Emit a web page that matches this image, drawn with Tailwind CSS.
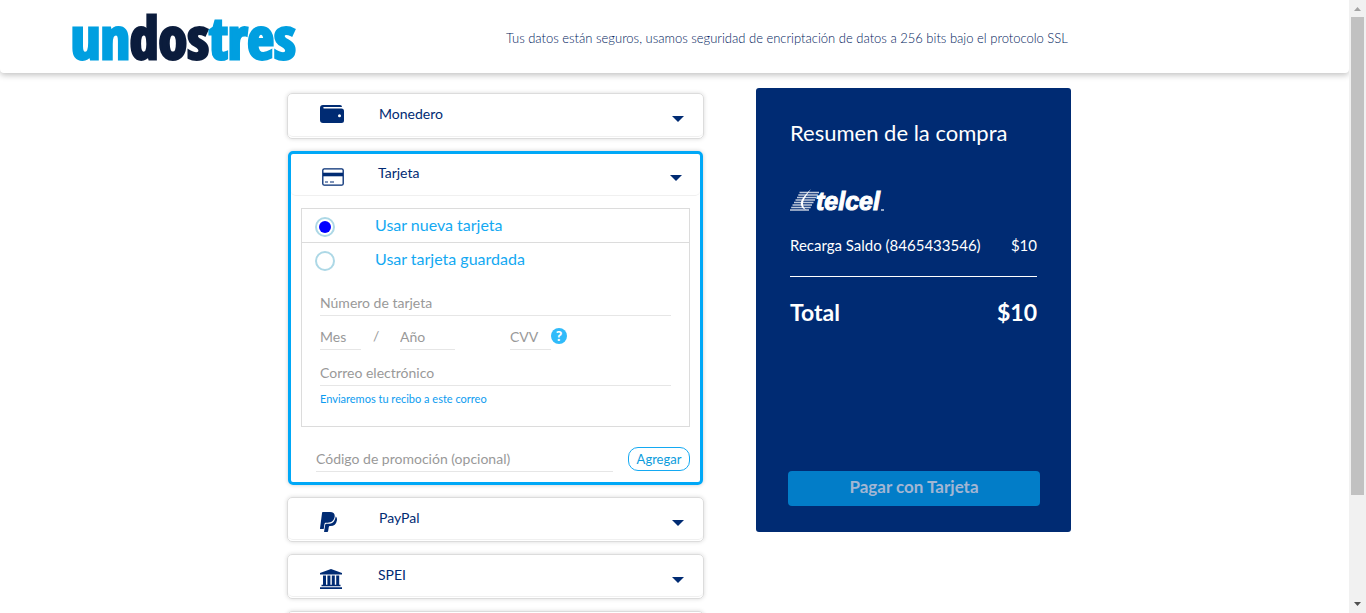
<!DOCTYPE html>
<html lang="es">
<head>
<meta charset="utf-8">
<title>UnDosTres - Pago</title>
<script src="https://cdn.jsdelivr.net/npm/@tailwindcss/browser@4"></script>
</head>
<body class="flex h-screen overflow-hidden bg-white font-['Lato',sans-serif] text-[#002b73]">
<div class="flex min-w-0 flex-1 flex-col">
  <header class="flex h-[73px] shrink-0 items-center rounded-b-[4px] pl-[71px] shadow-[0_2px_6px_rgba(0,0,0,0.25)]">
    <a href="#" class="w-[435px] shrink-0 font-['Noto_Sans_ExtraCondensed_Black','Noto_Sans_ExtraCondensed','Open_Sans_Condensed','Roboto_Condensed','Liberation_Sans',sans-serif] text-[58px] leading-[73px] font-black text-[#009fe0] [-webkit-text-stroke:3px_currentColor]">un<span class="text-[#0b1c3c]">dos</span>tres</a>
    <p class="pt-1 text-[13px] font-light text-[#001a5c]">Tus datos están seguros, usamos seguridad de encriptación de datos a 256 bits bajo el protocolo SSL</p>
  </header>

  <main class="flex items-start justify-center gap-[52px] pt-[15px] pl-[9px]">
    <section class="mt-[5px] flex w-[417px] flex-col gap-3" aria-label="Formas de pago">
      <div class="rounded-[5px] border border-[#dcdcdc] pb-px shadow-[0_0_4px_rgba(0,0,0,0.15)]">
        <button type="button" class="flex h-[43px] w-full rounded-[5px] border-b border-[#f0f0f0] pr-[19px] pl-8 text-left text-[14px]">
          <span class="w-[59px] pt-[11px]"><svg class="h-[18px] w-6" viewBox="0 0 24 18" fill="#002b73"><path fill-rule="evenodd" d="M3 0h17a2 2 0 0 1 2 2H4a.7.7 0 0 0 0 1.500H21.500a2.500 2.500 0 0 1 2.500 2.500V15.500a2.500 2.500 0 0 1-2.500 2.500H3a3 3 0 0 1-3-3V3a3 3 0 0 1 3-3ZM19.500 9.300a1.500 1.500 0 1 0 0 3 1.500 1.500 0 0 0 0-3Z"/></svg></span>
          <span class="flex-1 pt-[9px]">Monedero</span>
          <svg class="mt-[22px] h-[6px] w-3" viewBox="0 0 12 6" fill="#002b73"><path d="M0 0h12L6 6Z"/></svg>
        </button>
      </div>

      <div class="mx-px rounded-[5px] border-[3px] border-[#00a8f7] pb-[10px] shadow-[0_0_4px_rgba(0,0,0,0.2)]">
        <button type="button" class="flex h-[42px] w-full rounded-[5px] border-b border-[#f0f0f0] pr-[18px] pl-[31px] text-left text-[14px]">
          <span class="w-[56px] pt-[14px]"><svg class="h-[18px] w-[22px]" viewBox="0 0 22 18" fill="none" stroke="#002b73"><rect x=".8" y=".8" width="20.400" height="16.400" rx="1.500" stroke-width="1.300"/><path d="M1 6.500h20" stroke-width="3.600"/><path d="M3 14h3M8 14h4" stroke-width="1.200"/></svg></span>
          <span class="flex-1 pt-[8px]">Tarjeta</span>
          <svg class="mt-[21px] h-[6px] w-3" viewBox="0 0 12 6" fill="#002b73"><path d="M0 0h12L6 6Z"/></svg>
        </button>
        <form class="mx-[10px] mt-3">
          <div class="border border-[#dcdcdc] pb-[19px] text-[14px]">
            <label class="flex h-[34px] items-center border-b border-[#dcdcdc] pb-[2px] pl-[13px] text-[16px] text-[#14a9f2]">
              <input type="radio" name="card" checked class="mt-1 mr-10 size-5 appearance-none rounded-full border-2 border-[#add8e6] bg-white checked:bg-[#0000ff] checked:bg-clip-content checked:p-[2px]">Usar nueva tarjeta
            </label>
            <label class="flex h-[34px] items-center pb-[2px] pl-[13px] text-[16px] text-[#14a9f2]">
              <input type="radio" name="card" class="mt-1 mr-10 size-5 appearance-none rounded-full border-2 border-[#add8e6] bg-white checked:bg-[#0000ff] checked:bg-clip-content checked:p-[2px]">Usar tarjeta guardada
            </label>
            <div class="px-[18px]">
              <input aria-label="Número de tarjeta" placeholder="Número de tarjeta" class="mt-[14px] block h-[25px] w-full border-b border-[#e6e6e6] pb-[2px] outline-none placeholder:text-[#999]">
              <div class="mt-[9px] flex h-[25px]">
                <input aria-label="Mes" placeholder="Mes" class="h-full w-[41px] border-b border-[#e6e6e6] pb-[2px] outline-none placeholder:text-[#999]">
                <span class="w-[39px] pl-3 text-[#999]">/</span>
                <input aria-label="Año" placeholder="Año" class="mr-[55px] h-full w-[55px] border-b border-[#e6e6e6] pb-[2px] outline-none placeholder:text-[#999]">
                <input aria-label="CVV" placeholder="CVV" class="h-full w-[41px] border-b border-[#e6e6e6] pb-[2px] outline-none placeholder:text-[#999]">
                <button type="button" aria-label="Ayuda" class="mt-[3px] flex size-4 items-center justify-center rounded-full bg-[#30bbfa] text-[14px] leading-none font-black text-white">?</button>
              </div>
              <input type="email" aria-label="Correo electrónico" placeholder="Correo electrónico" class="mt-[11px] block h-[25px] w-full border-b border-[#e6e6e6] pb-[2px] outline-none placeholder:text-[#999]">
              <p class="mt-[5px] text-[11px] leading-4 text-[#0c9cf0]">Enviaremos tu recibo a este correo</p>
            </div>
          </div>
          <div class="mt-5 flex items-start gap-[15px] pl-[15px]">
            <input aria-label="Código de promoción (opcional)" placeholder="Código de promoción (opcional)" class="h-[25px] min-w-0 flex-1 border-b border-[#e6e6e6] pb-[2px] text-[14px] outline-none placeholder:text-[#999]">
            <button type="button" class="h-6 w-[62px] rounded-[10px] border border-[#14a9f2] pt-[2px] text-[13px] text-[#0c9cdc]">Agregar</button>
          </div>
        </form>
      </div>

      <div class="rounded-[5px] border border-[#dcdcdc] pb-px shadow-[0_0_4px_rgba(0,0,0,0.15)]">
        <button type="button" class="flex h-[42px] w-full rounded-[5px] border-b border-[#f0f0f0] pr-[19px] pl-8 text-left text-[14px]">
          <span class="w-[59px] pt-[14px]"><svg class="h-5 w-[17px]" viewBox="0 0 17 20" fill="#002b73"><path d="M2.800 0H10c3.600 0 5.200 2 4.600 5.100-.8 4-3.300 5.600-6.900 5.600H6c-.9 0-1.300.5-1.500 1.400L3.700 17H.4c-.3 0-.5-.2-.4-.5L2.100.6C2.200.2 2.400 0 2.800 0Z"/><path d="M15.700 4.500c1.100.9 1.500 2.300 1.200 4-.7 3.800-2.900 5.500-6.300 5.500h-.8c-.6 0-.9.300-1 .9l-.7 4.300c-.1.500-.4.800-.9.800H4.500c-.3 0-.5-.2-.4-.5l1.100-6.700c.1-.7.500-1 1.200-1h1.500c4.300 0 7-2 7.800-7.300Z"/></svg></span>
          <span class="flex-1 pt-[9px]">PayPal</span>
          <svg class="mt-[22px] h-[6px] w-3" viewBox="0 0 12 6" fill="#002b73"><path d="M0 0h12L6 6Z"/></svg>
        </button>
      </div>

      <div class="rounded-[5px] border border-[#dcdcdc] pb-px shadow-[0_0_4px_rgba(0,0,0,0.15)]">
        <button type="button" class="flex h-[42px] w-full rounded-[5px] border-b border-[#f0f0f0] pr-[19px] pl-8 text-left text-[14px]">
          <span class="w-[58px] pt-[14px]"><svg class="h-5 w-[22px]" viewBox="0 0 22 20" fill="#002b73"><path d="M11 0l11 4v1.600H0V4ZM3 6.500h3V16H3ZM7.400 6.500h3V16h-3ZM11.800 6.500h3V16h-3ZM16.200 6.500h3V16h-3ZM1.500 15.800h19v1.400h-19ZM0 18.200h22V20H0Z"/></svg></span>
          <span class="flex-1 pt-[9px]">SPEI</span>
          <svg class="mt-[22px] h-[6px] w-3" viewBox="0 0 12 6" fill="#002b73"><path d="M0 0h12L6 6Z"/></svg>
        </button>
      </div>

      <div class="h-11 rounded-[5px] border border-[#dcdcdc] shadow-[0_0_4px_rgba(0,0,0,0.15)]"></div>
    </section>

    <aside class="flex h-[444px] w-[315px] flex-col rounded-[3px] bg-[#002b73] px-8 pb-[26px] text-white">
      <h1 class="mt-[30px] px-[2px] text-[22px] leading-[30px]">Resumen de la compra</h1>
      <svg class="mt-[37px] ml-[2px] h-8 w-[104px]" viewBox="0 -4 104 32" role="img" aria-label="telcel">
        <path d="M9.500 3.500H29M8.300 6h19.500M7 8.500h19.500M5.500 11H25M4 13.500h19.500M2.500 16H22M1.200 18.500h19.500M0 21h19" stroke="#fff" stroke-width="1.700" opacity=".75"/>
        <path d="M21 0C13 8 10 12 11 16c.5 2 2 4 5 5-2-2-3-4-3-6C13 11 16 7 21 0Z" fill="#fff"/>
        <text x="26" y="21" font-family="Liberation Sans, sans-serif" font-size="25" font-weight="700" font-style="italic" fill="#fff" stroke="#fff" stroke-width="1">telcel</text>
        <path d="M91 21h3" stroke="#fff" stroke-width="1.500" opacity=".8"/>
      </svg>
      <div class="mt-[18px] flex justify-between px-[2px] text-[15px] leading-5"><span>Recarga Saldo (8465433546)</span><span>$10</span></div>
      <hr class="mx-[2px] mt-[21px] border-white">
      <div class="mt-5 flex justify-between px-[2px] text-[23px] leading-[30px] font-bold"><span>Total</span><span>$10</span></div>
      <button type="button" disabled class="mt-auto h-[35px] w-[252px] rounded-[4px] bg-[#027dc8] pb-1 text-[17px] font-bold text-[#a3b6d3]">Pagar con Tarjeta</button>
    </aside>
  </main>
</div>

<div class="flex w-[17px] shrink-0 flex-col items-center bg-[#f1f1f1]" aria-hidden="true">
  <svg class="h-[17px] w-[17px] shrink-0" viewBox="0 0 17 17" fill="#a3a3a3"><path d="M5 11h7L8.500 7Z"/></svg>
  <div class="h-[78%] w-[13px] bg-[#c1c1c1]"></div>
  <svg class="mt-auto h-[17px] w-[17px] shrink-0" viewBox="0 0 17 17" fill="#505050"><path d="M5 6h7l-3.500 4Z"/></svg>
</div>
</body>
</html>
